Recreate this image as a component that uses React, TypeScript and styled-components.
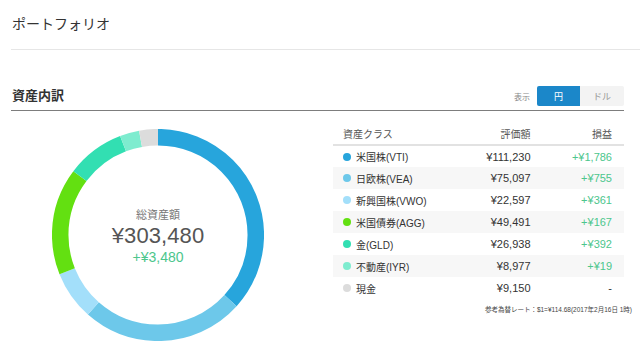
import React from 'react';
import styled, { createGlobalStyle } from 'styled-components';

const GlobalStyle = createGlobalStyle`
    body {
        margin: 0;
        background: #fff;
        font-family: "Liberation Sans", "Noto Sans CJK JP", sans-serif;
        color: #333;
    }
`;

interface Asset {
    name: string;
    value: number;
    gain: number | null;
    color: string;
}

const assets: Asset[] = [
    { name: '米国株(VTI)', value: 111230, gain: 1786, color: '#27a5dc' },
    { name: '日欧株(VEA)', value: 75097, gain: 755, color: '#6dc8ea' },
    { name: '新興国株(VWO)', value: 22597, gain: 361, color: '#a3dffa' },
    { name: '米国債券(AGG)', value: 49491, gain: 167, color: '#63e011' },
    { name: '金(GLD)', value: 26938, gain: 392, color: '#32dfb2' },
    { name: '不動産(IYR)', value: 8977, gain: 19, color: '#7eeccf' },
    { name: '現金', value: 9150, gain: null, color: '#dcdcdc' },
];

const yen = (n: number) => '¥' + n.toLocaleString('en-US');

const Page = styled.div`
    padding-left: 11px;
`;

const PageHeader = styled.header`
    height: 49px;
    display: flex;
    align-items: center;
    border-bottom: 1px solid #e6e6e6;
    padding-left: 1px;
`;

const PageTitle = styled.h1`
    margin: 0;
    font-size: 14px;
    font-weight: normal;
    color: #333;
    margin-top: -4px;
`;

const Section = styled.section`
    margin-right: 16px;
`;

const SectionHeader = styled.div`
    height: 61px;
    box-sizing: border-box;
    display: flex;
    align-items: flex-end;
    justify-content: space-between;
    padding: 0 0 4px 1px;
    border-bottom: 1px solid #7d7d7d;
`;

const SectionTitle = styled.h2`
    margin: 0 0 2px;
    font-size: 13px;
    font-weight: bold;
    color: #333;
`;

const Toggle = styled.div`
    display: flex;
    align-items: center;
`;

const ToggleLabel = styled.span`
    font-size: 8px;
    color: #888;
    margin-right: 7px;
`;

const ToggleButton = styled.button<{ $active?: boolean }>`
    width: ${p => (p.$active ? 43 : 44)}px;
    height: 20px;
    border: none;
    padding: 0;
    font-family: inherit;
    font-size: 9px;
    background: ${p => (p.$active ? '#1b87c9' : '#f3f3f3')};
    color: ${p => (p.$active ? '#fff' : '#999')};
    border-radius: ${p => (p.$active ? '2px 0 0 2px' : '0 2px 2px 0')};
`;

const Body = styled.div`
    display: flex;
    align-items: flex-start;
`;

const ChartPanel = styled.div`
    width: 294px;
    display: flex;
    justify-content: center;
    padding-top: 18px;
`;

const Donut = styled.div`
    position: relative;
    width: 212px;
    height: 212px;
`;

const DonutCenter = styled.div`
    position: absolute;
    inset: 0;
    display: flex;
    flex-direction: column;
    align-items: center;
    justify-content: center;
    padding-top: 4px;
`;

const TotalLabel = styled.div`
    font-size: 11px;
    line-height: 13px;
    color: #777;
    margin-bottom: 1px;
`;

const TotalValue = styled.div`
    font-size: 22px;
    line-height: 26px;
    color: #555;
    letter-spacing: 0.1px;
`;

const TotalGain = styled.div`
    font-size: 14px;
    line-height: 17px;
    color: #4cc68c;
`;

const TablePanel = styled.div`
    margin-left: 28px;
    flex: 1;
    padding-top: 11px;
`;

const Table = styled.table`
    width: 100%;
    border-collapse: collapse;
    table-layout: fixed;
`;

const HeadCell = styled.th<{ $align?: 'left' | 'right' }>`
    height: 22px;
    font-size: 10px;
    font-weight: normal;
    color: #555;
    text-align: ${p => p.$align ?? 'right'};
    padding: 0 12px 0 ${p => (p.$align === 'left' ? '10px' : '0')};
    border-bottom: 2px solid #e2e2e2;
    vertical-align: middle;
`;

const Row = styled.tr<{ $striped: boolean }>`
    background: ${p => (p.$striped ? '#f7f7f7' : 'transparent')};
    height: 22px;
`;

const Cell = styled.td<{ $align?: 'left' | 'right'; $gain?: boolean }>`
    font-size: ${p => (p.$align === 'left' ? '10px' : '11px')};
    color: ${p => (p.$gain ? '#4cc68c' : '#333')};
    text-align: ${p => p.$align ?? 'right'};
    padding: 0 ${p => (p.$align === 'left' ? '0' : '12px')} 0 ${p => (p.$align === 'left' ? '10px' : '0')};
    vertical-align: middle;
    white-space: nowrap;
`;

const NameWrap = styled.span`
    display: inline-flex;
    align-items: center;
    gap: 5px;
`;

const Dot = styled.span<{ $color: string }>`
    width: 8px;
    height: 8px;
    border-radius: 50%;
    background: ${p => p.$color};
    flex: none;
`;

const Note = styled.div`
    font-size: 6.5px;
    color: #444;
    text-align: right;
    margin-top: 5px;
    margin-right: -8px;
`;

function DonutChart() {
    const total = assets.reduce((s, a) => s + a.value, 0);
    const r = 97.8;
    const c = 2 * Math.PI * r;
    let offset = 0;
    return (
        <svg width="212" height="212" viewBox="0 0 212 212">
            <g transform="rotate(-90 106 106)">
                {assets.map(a => {
                    const len = (a.value / total) * c;
                    const el = (
                        <circle
                            key={a.name}
                            cx="106"
                            cy="106"
                            r={r}
                            fill="none"
                            stroke={a.color}
                            strokeWidth="16.5"
                            strokeDasharray={`${len} ${c - len}`}
                            strokeDashoffset={-offset}
                        />
                    );
                    offset += len;
                    return el;
                })}
            </g>
        </svg>
    );
}

export default function App() {
    return (
        <Page>
            <GlobalStyle />
            <PageHeader>
                <PageTitle>ポートフォリオ</PageTitle>
            </PageHeader>
            <Section>
                <SectionHeader>
                    <SectionTitle>資産内訳</SectionTitle>
                    <Toggle>
                        <ToggleLabel>表示</ToggleLabel>
                        <ToggleButton $active>円</ToggleButton>
                        <ToggleButton>ドル</ToggleButton>
                    </Toggle>
                </SectionHeader>
                <Body>
                    <ChartPanel>
                        <Donut>
                            <DonutChart />
                            <DonutCenter>
                                <TotalLabel>総資産額</TotalLabel>
                                <TotalValue>¥303,480</TotalValue>
                                <TotalGain>+¥3,480</TotalGain>
                            </DonutCenter>
                        </Donut>
                    </ChartPanel>
                    <TablePanel>
                        <Table>
                            <colgroup>
                                <col style={{ width: '42%' }} />
                                <col style={{ width: '30%' }} />
                                <col style={{ width: '28%' }} />
                            </colgroup>
                            <thead>
                                <tr>
                                    <HeadCell $align="left">資産クラス</HeadCell>
                                    <HeadCell>評価額</HeadCell>
                                    <HeadCell>損益</HeadCell>
                                </tr>
                            </thead>
                            <tbody>
                                {assets.map((a, i) => (
                                    <Row key={a.name} $striped={i % 2 === 1}>
                                        <Cell $align="left">
                                            <NameWrap>
                                                <Dot $color={a.color} />
                                                {a.name}
                                            </NameWrap>
                                        </Cell>
                                        <Cell>{yen(a.value)}</Cell>
                                        <Cell $gain={a.gain !== null}>
                                            {a.gain !== null ? '+' + yen(a.gain) : '-'}
                                        </Cell>
                                    </Row>
                                ))}
                            </tbody>
                        </Table>
                        <Note>参考為替レート：$1=¥114.68(2017年2月16日 1時)</Note>
                    </TablePanel>
                </Body>
            </Section>
        </Page>
    );
}
